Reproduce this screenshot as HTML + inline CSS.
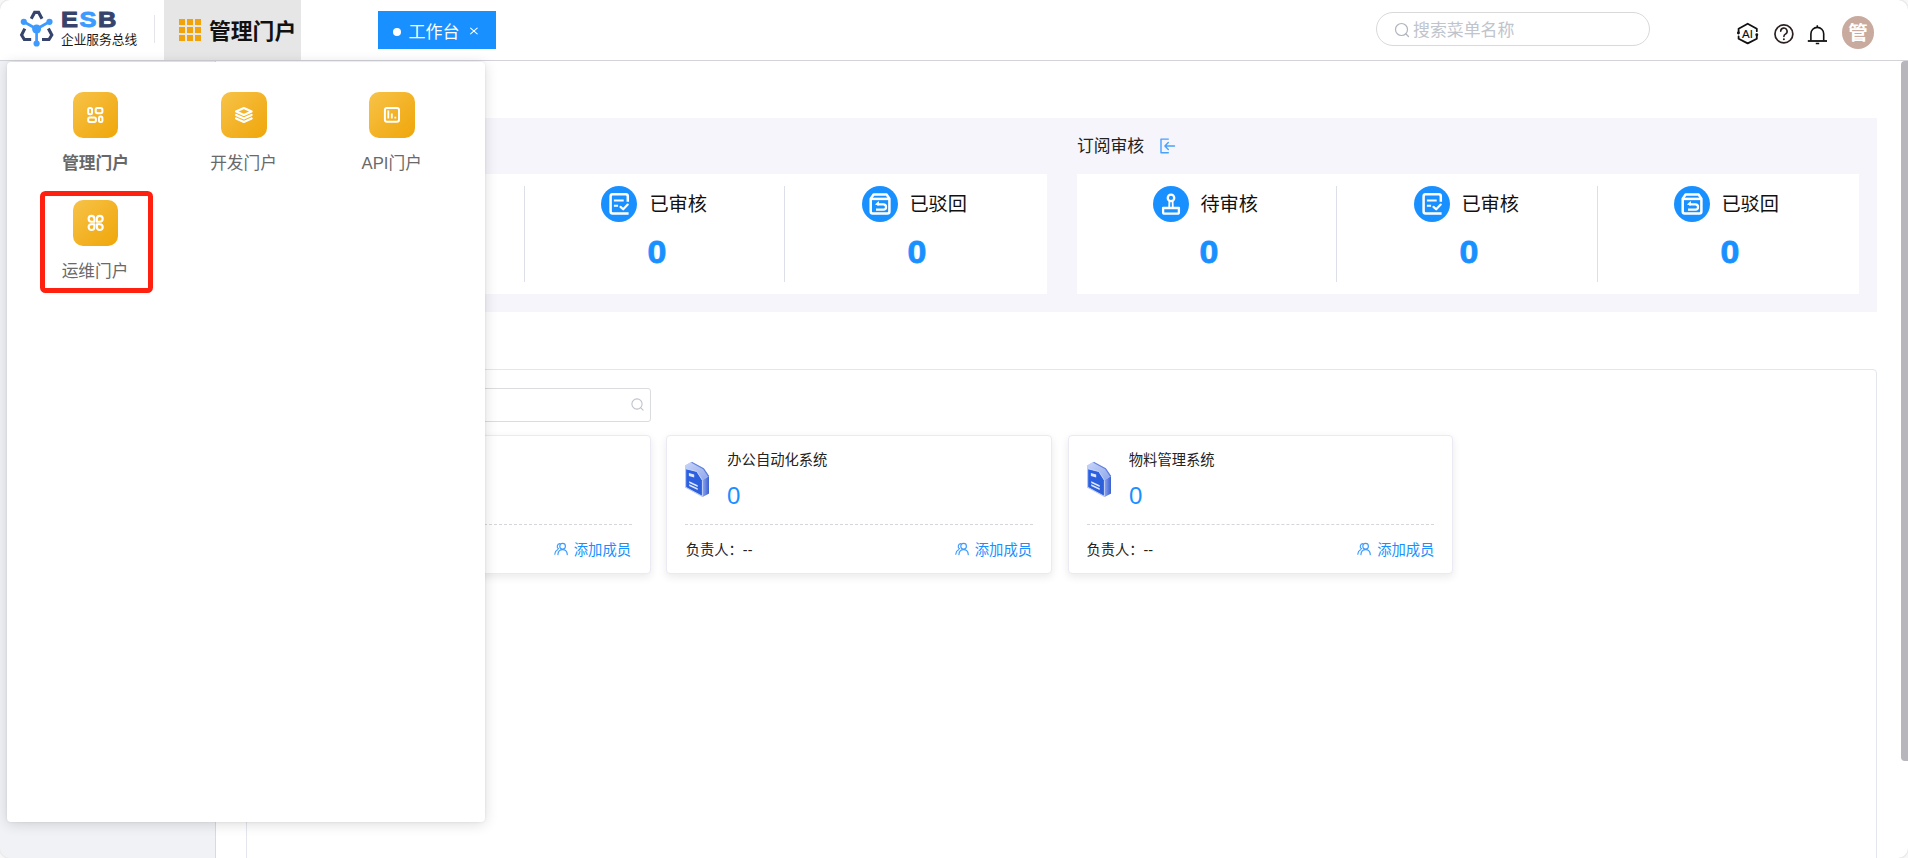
<!DOCTYPE html>
<html lang="zh-CN">
<head>
<meta charset="utf-8">
<title>ESB 企业服务总线</title>
<style>
*{box-sizing:border-box;margin:0;padding:0}
html,body{width:1908px;height:858px;overflow:hidden;background:#fff;}
body{font-family:"Liberation Sans","Noto Sans CJK SC",sans-serif;color:#222;position:relative;}
.abs{position:absolute}
/* header */
#header{position:absolute;left:0;top:0;width:1908px;height:61px;background:#fff;border-bottom:1px solid #d2d4d9;z-index:5}
#logo-ic{position:absolute;left:19px;top:10px;width:36px;height:37px}
#esb{position:absolute;left:61px;top:7.500px;font-size:22.500px;line-height:24px;font-weight:700;color:#36446c;letter-spacing:1.400px;-webkit-text-stroke:0.9px #36446c;transform:scaleX(1.13);transform-origin:left center}
#esb b{color:#3d9bff;-webkit-text-stroke:0.9px #3d9bff}
#esb-sub{position:absolute;left:61px;top:32px;font-size:12.7px;line-height:16px;color:#1a1a1a;font-weight:400;white-space:nowrap}
#hdiv{position:absolute;left:154px;top:15px;width:1px;height:28px;background:#e4e5ea}
#portal-tab{position:absolute;left:164px;top:0;width:137px;height:60px;background:#e6e6e6}
#grid-ic{position:absolute;left:15px;top:19px;width:22px;height:22px}
#portal-tab span{position:absolute;left:45px;top:17.4px;font-size:21.8px;line-height:30px;font-weight:700;color:#111;white-space:nowrap}
#work-tab{position:absolute;left:378px;top:11px;width:118px;height:38px;background:#1890ff;color:#fff}
#work-tab i{position:absolute;left:15px;top:17px;width:8px;height:8px;border-radius:50%;background:#fff}
#work-tab span{position:absolute;left:30.5px;top:9.5px;font-size:17px;line-height:24px;white-space:nowrap}
#work-tab svg{position:absolute;left:90.500px;top:15.200px;width:10px;height:10px}
#search{position:absolute;left:1376px;top:12px;width:274px;height:34px;border:1px solid #d9d9d9;border-radius:17px;background:#fff}
#search svg{position:absolute;left:17px;top:8.5px;width:16px;height:16px}
#search span{position:absolute;left:36px;top:6px;font-size:16.9px;line-height:24px;color:#c0c4cc;white-space:nowrap}
#avatar{position:absolute;left:1842px;top:16px;width:32px;height:32.600px;border-radius:50%;background:#c8aa9f;color:#fff;font-size:19.500px;font-weight:700;line-height:35px;text-align:center}
/* layout behind */
#sidebar{position:absolute;left:0;top:61px;width:216px;height:797px;background:#f0f2f5;border-right:1px solid #d8dade}
#panel{position:absolute;left:246px;top:369px;width:1631px;height:520px;border:1px solid #e4e6ee;border-radius:4px;background:#fff}
#band{position:absolute;left:246px;top:118px;width:1631px;height:194px;background:#f5f5fb}
.wcard{position:absolute;top:174px;height:120px;background:#fff}
.vdiv{position:absolute;top:186px;width:1px;height:96px;background:#dddfe8}
.stat-ic{position:absolute;top:186px;width:36px;height:36px;border-radius:50%;background:#1890ff}
.stat-ic svg{position:absolute;left:0;top:0;width:36px;height:36px}
.stat-t{position:absolute;top:191.400px;margin-left:-.6px;font-size:19.2px;line-height:28px;color:#111;white-space:nowrap}
.stat-n{position:absolute;top:232.400px;width:60px;margin-left:-30px;text-align:center;font-size:32px;line-height:40px;font-weight:700;color:#1890ff;-webkit-text-stroke:.8px #1890ff;transform:scaleX(1.06)}
.sub-title{position:absolute;top:135.400px;font-size:16.8px;line-height:24px;color:#222;white-space:nowrap}
#sub-ic{position:absolute;left:1158px;top:136px;width:20px;height:20px}
#sinput{position:absolute;left:300px;top:388px;width:351px;height:34px;border:1px solid #dbdcdf;border-radius:3px;background:#fff}
#sinput svg{position:absolute;right:5.500px;top:8px;width:15px;height:15px}
.card{position:absolute;top:435px;width:386px;height:139px;background:#fff;border:1px solid #eaeaf4;border-radius:4px;box-shadow:0 3px 8px rgba(0,0,0,.085)}
.card .ttl{position:absolute;left:60.300px;top:13.700px;font-size:14.3px;line-height:20px;color:#222;white-space:nowrap}
.card .num{position:absolute;left:60px;top:44px;font-size:24px;line-height:32px;color:#1890ff}
.card .dash{position:absolute;left:18px;right:18px;top:88px;height:0;border-top:1px dashed #d4d6dc}
.card .own{position:absolute;left:18.700px;top:104px;font-size:14.3px;line-height:20px;color:#222;white-space:nowrap}
.card .add{position:absolute;right:19px;top:104px;font-size:14.3px;line-height:20px;color:#1890ff;white-space:nowrap}
.card .add svg{position:absolute;left:-22px;top:2px;width:16px;height:16px}
.card .doc{position:absolute;left:9px;top:16px;width:44px;height:54px}
#frame{position:absolute;left:0;top:0;width:1908px;height:858px;border-radius:10px;box-shadow:0 0 0 1px #e9e9e9,0 0 0 40px #f7f7f7;z-index:100;pointer-events:none}
.c3 .own{left:17.400px}.c3 .add{right:17.600px}.c3 .ttl{left:59.800px}
/* scrollbar */
#sb{position:absolute;left:1901px;top:61px;width:8px;height:700px;background:#b6b6bc;border-radius:4px 0 0 4px}
/* dropdown */
#dd{position:absolute;left:7px;top:62px;width:478px;height:760px;background:#fff;border-radius:4px;box-shadow:0 2px 14px rgba(0,0,0,.14),0 0 3px rgba(0,0,0,.08);z-index:10}
.tile{position:absolute;width:46px;height:46px;border-radius:10px;background:linear-gradient(135deg,#f7c349 0%,#f3b225 55%,#efa70a 100%);overflow:hidden}
.tile svg{position:absolute;left:0;top:0;width:46px;height:46px}
.tl{position:absolute;width:120px;margin-left:-60px;text-align:center;font-size:16.7px;line-height:24px;color:#696969;white-space:nowrap}
.tl.b{font-weight:700;color:#686868}
#red{position:absolute;left:32.500px;top:129px;width:113.500px;height:102px;border:5px solid #ff2010;border-radius:5.500px}
</style>
</head>
<body>
<div id="sidebar"></div>
<div id="band"></div>
<div id="panel"></div>

<!-- stats left (partially hidden) -->
<div class="wcard" style="left:264px;width:783px"></div>
<div class="vdiv" style="left:524px"></div>
<div class="vdiv" style="left:784px"></div>
<div class="sub-title" style="left:264px">服务审核</div>
<div class="stat-ic" style="left:340px"><svg viewBox="0 0 36 36" fill="none" stroke="#fff" stroke-width="2.300" stroke-linejoin="round"><circle cx="18" cy="11.900" r="3.250"/><path d="M16.400 15L16.200 21M19.600 15L19.800 21" stroke-width="1.800"/><path d="M10.100 22H25.900V26.200a1.500 1.500 0 0 1-1.500 1.500H11.600a1.500 1.500 0 0 1-1.500-1.500Z"/></svg></div>
<div class="stat-t" style="left:388px">待审核</div>
<div class="stat-n" style="left:396px">0</div>
<div class="stat-ic" style="left:601px"><svg viewBox="0 0 36 36" fill="none" stroke="#fff" stroke-width="2.500" stroke-linecap="butt" stroke-linejoin="round"><path d="M26.800 15.800V10.300a2 2 0 0 0-2-2H11.600a2 2 0 0 0-2 2V25.500a2 2 0 0 0 2 2H27.600"/><path d="M12.900 14.600H22.700M12.900 19.800H17.100" stroke-width="2"/><path d="M19.500 20.900L22.200 23.300L26.700 18.600" stroke-width="2.200" stroke-linecap="round"/></svg></div>
<div class="stat-t" style="left:650px">已审核</div>
<div class="stat-n" style="left:657px">0</div>
<div class="stat-ic" style="left:862px"><svg viewBox="0 0 36 36" fill="none" stroke="#fff" stroke-width="2.500" stroke-linejoin="round"><path d="M11.600 8.500H24.600L27.400 12.600V25.500a2 2 0 0 1-2 2H10.700a2 2 0 0 1-2-2V12.600Z"/><path d="M8.700 12.900H27.400"/><path d="M15 18.400H21.400a2.650 2.650 0 0 1 0 5.300H14" stroke-width="2.200"/><path d="M12.900 18.400L16.900 14.900V19.500Z" fill="#fff" stroke="none"/></svg></div>
<div class="stat-t" style="left:910px">已驳回</div>
<div class="stat-n" style="left:917px">0</div>

<!-- stats right -->
<div class="sub-title" style="left:1077px">订阅审核</div>
<svg id="sub-ic" viewBox="1158 136 20 20" fill="none" stroke="#47a1ff" stroke-width="1.400" stroke-linecap="round" stroke-linejoin="round"><path d="M1168.300 139.100H1161V152.700H1168.300"/><path d="M1174.500 146H1165M1168.300 142.600L1164.900 146L1168.300 149.400"/></svg>
<div class="wcard" style="left:1077px;width:782px"></div>
<div class="vdiv" style="left:1336px"></div>
<div class="vdiv" style="left:1597px"></div>
<div class="stat-ic" style="left:1153px"><svg viewBox="0 0 36 36" fill="none" stroke="#fff" stroke-width="2.300" stroke-linejoin="round"><circle cx="18" cy="11.900" r="3.250"/><path d="M16.400 15L16.200 21M19.600 15L19.800 21" stroke-width="1.800"/><path d="M10.100 22H25.900V26.200a1.500 1.500 0 0 1-1.500 1.500H11.600a1.500 1.500 0 0 1-1.500-1.500Z"/></svg></div>
<div class="stat-t" style="left:1201px">待审核</div>
<div class="stat-n" style="left:1209px">0</div>
<div class="stat-ic" style="left:1414px"><svg viewBox="0 0 36 36" fill="none" stroke="#fff" stroke-width="2.500" stroke-linecap="butt" stroke-linejoin="round"><path d="M26.800 15.800V10.300a2 2 0 0 0-2-2H11.600a2 2 0 0 0-2 2V25.500a2 2 0 0 0 2 2H27.600"/><path d="M12.900 14.600H22.700M12.900 19.800H17.100" stroke-width="2"/><path d="M19.500 20.900L22.200 23.300L26.700 18.600" stroke-width="2.200" stroke-linecap="round"/></svg></div>
<div class="stat-t" style="left:1462px">已审核</div>
<div class="stat-n" style="left:1469px">0</div>
<div class="stat-ic" style="left:1674px"><svg viewBox="0 0 36 36" fill="none" stroke="#fff" stroke-width="2.500" stroke-linejoin="round"><path d="M11.600 8.500H24.600L27.400 12.600V25.500a2 2 0 0 1-2 2H10.700a2 2 0 0 1-2-2V12.600Z"/><path d="M8.700 12.900H27.400"/><path d="M15 18.400H21.400a2.650 2.650 0 0 1 0 5.300H14" stroke-width="2.200"/><path d="M12.900 18.400L16.900 14.900V19.500Z" fill="#fff" stroke="none"/></svg></div>
<div class="stat-t" style="left:1722px">已驳回</div>
<div class="stat-n" style="left:1730px">0</div>

<!-- system list -->
<div id="sinput"><svg viewBox="0 0 15 15" fill="none" stroke="#bfc3cb" stroke-width="1.100" stroke-linecap="round"><circle cx="7" cy="7" r="5.100"/><path d="M10.800 10.800l2.300 2.400"/></svg></div>

<div class="card" style="left:265px"><div class="dash"></div><div class="add"><svg viewBox="0 0 16 16" fill="none" stroke="#3b9bff" stroke-width="1.150" stroke-linecap="round"><circle cx="10.600" cy="4.200" r="2.800"/><path d="M5.900 12.600c.2-3 2.100-5 4.700-5s4.500 2 4.700 5"/><path d="M7.800 1.600a2.800 2.800 0 0 0-1.200 5.200"/><path d="M2.800 12.200c.1-2 1-3.600 2.700-4.500"/></svg>添加成员</div></div>

<div class="card" style="left:666px"><svg class="doc" viewBox="676 452 44 54"><g>
<path d="M685.100 465.500L691.100 461.900L703.700 468.400L709 476.200V493.500L702.400 497L685.100 487.500Z" fill="#b4c4f4"/>
<path d="M685.700 468.700L696.800 471.500L702.400 480.300V496.300L685.700 487.200Z" fill="url(#dg1)"/>
<path d="M702.400 480.300L709 476.200V493.500L702.400 497Z" fill="url(#dg2)"/>
<path d="M691.100 461.900L703.700 468.400L709 476.200L702.400 480.300L696.800 471.500L685.700 468.700L685.100 465.500Z" fill="url(#dg3)"/>
<path d="M691.600 462.300L703.500 468.700L708.700 476.400" fill="none" stroke="#4a6cd6" stroke-width="1.300" stroke-opacity=".75"/><path d="M685.700 468.700L696.800 471.500L702.400 480.300V496.300L685.700 487.200Z" fill="none" stroke="#c9d6fb" stroke-width=".9"/><path d="M688.900 473.100L694.200 474.600V477.600L688.900 476.100Z" fill="#dfe7ff"/>
<path d="M689.200 481.200L697.700 485.300V487L689.200 482.900Z" fill="#dfe7ff"/>
<path d="M689.200 484.200L697.700 488.300V490L689.200 485.900Z" fill="#dfe7ff"/>
</g></svg><div class="ttl">办公自动化系统</div><div class="num">0</div><div class="dash"></div><div class="own">负责人：--</div><div class="add"><svg viewBox="0 0 16 16" fill="none" stroke="#3b9bff" stroke-width="1.150" stroke-linecap="round"><circle cx="10.600" cy="4.200" r="2.800"/><path d="M5.900 12.600c.2-3 2.100-5 4.700-5s4.500 2 4.700 5"/><path d="M7.800 1.600a2.800 2.800 0 0 0-1.200 5.200"/><path d="M2.800 12.200c.1-2 1-3.600 2.700-4.500"/></svg>添加成员</div></div>

<div class="card c3" style="left:1068px;width:385px"><svg class="doc" viewBox="676 452 44 54"><g>
<path d="M685.100 465.500L691.100 461.900L703.700 468.400L709 476.200V493.500L702.400 497L685.100 487.500Z" fill="#b4c4f4"/>
<path d="M685.700 468.700L696.800 471.500L702.400 480.300V496.300L685.700 487.200Z" fill="url(#dg1)"/>
<path d="M702.400 480.300L709 476.200V493.500L702.400 497Z" fill="url(#dg2)"/>
<path d="M691.100 461.900L703.700 468.400L709 476.200L702.400 480.300L696.800 471.500L685.700 468.700L685.100 465.500Z" fill="url(#dg3)"/>
<path d="M691.600 462.300L703.500 468.700L708.700 476.400" fill="none" stroke="#4a6cd6" stroke-width="1.300" stroke-opacity=".75"/><path d="M685.700 468.700L696.800 471.500L702.400 480.300V496.300L685.700 487.200Z" fill="none" stroke="#c9d6fb" stroke-width=".9"/><path d="M688.900 473.100L694.200 474.600V477.600L688.900 476.100Z" fill="#dfe7ff"/>
<path d="M689.200 481.200L697.700 485.300V487L689.200 482.900Z" fill="#dfe7ff"/>
<path d="M689.200 484.200L697.700 488.300V490L689.200 485.900Z" fill="#dfe7ff"/>
</g></svg><div class="ttl">物料管理系统</div><div class="num">0</div><div class="dash"></div><div class="own">负责人：--</div><div class="add"><svg viewBox="0 0 16 16" fill="none" stroke="#3b9bff" stroke-width="1.150" stroke-linecap="round"><circle cx="10.600" cy="4.200" r="2.800"/><path d="M5.900 12.600c.2-3 2.100-5 4.700-5s4.500 2 4.700 5"/><path d="M7.800 1.600a2.800 2.800 0 0 0-1.200 5.200"/><path d="M2.800 12.200c.1-2 1-3.600 2.700-4.500"/></svg>添加成员</div></div>

<svg width="0" height="0" style="position:absolute"><defs>
<linearGradient id="dg1" x1="0" y1="0" x2="1" y2="1"><stop offset="0" stop-color="#2a60e4"/><stop offset="1" stop-color="#2d5fd6"/></linearGradient><linearGradient id="dg2" x1="0" y1="0" x2="1" y2="0"><stop offset="0" stop-color="#8fa8ee"/><stop offset="1" stop-color="#3a5fd0"/></linearGradient><linearGradient id="dg3" x1="0" y1="0" x2="1" y2="1"><stop offset="0" stop-color="#c9d6fa"/><stop offset="1" stop-color="#8ea6ea"/></linearGradient>

</defs></svg>

<div id="sb"></div>

<!-- header -->
<div id="header">
<svg id="logo-ic" viewBox="19 10 36 37">
<g fill="none" stroke="#36446c" stroke-width="3.1" stroke-linejoin="miter">
<path d="M31.2 18.8L34.6 12.4H38.6L42 18.8"/>
<path d="M24.8 28.6L21.6 35L24.3 39.5H31.2"/>
<path d="M48.4 28.6L51.8 35L49 39.5H42"/>
</g>
<g stroke="#3d9bff" stroke-width="2.700" fill="#3d9bff">
<path d="M36.600 29L23.800 21.800M36.600 29L49.500 21.800M36.600 29V43"/>
<circle cx="36.600" cy="29" r="4.500" stroke="none"/>
<circle cx="23.800" cy="21.800" r="3.100" stroke="none"/>
<circle cx="49.500" cy="21.800" r="3.100" stroke="none"/>
<circle cx="36.600" cy="43.500" r="3.100" stroke="none"/>
</g>
</svg>
<div id="esb">E<b>S</b>B</div>
<div id="esb-sub">企业服务总线</div>
<div id="hdiv"></div>
<div id="portal-tab">
<svg id="grid-ic" viewBox="0 0 22 22" fill="#f0a30a"><rect x="0" y="0" width="6" height="6"/><rect x="8" y="0" width="6" height="6"/><rect x="16" y="0" width="6" height="6"/><rect x="0" y="8" width="6" height="6"/><rect x="8" y="8" width="6" height="6"/><rect x="16" y="8" width="6" height="6"/><rect x="0" y="16" width="6" height="6"/><rect x="8" y="16" width="6" height="6"/><rect x="16" y="16" width="6" height="6"/></svg>
<span>管理门户</span>
</div>
<div id="work-tab"><i></i><span>工作台</span><svg viewBox="0 0 10 10" fill="none" stroke="#fff" stroke-width="1.050" stroke-linecap="round"><path d="M1.600 2.100L8.200 7.900M8.200 2.100L1.600 7.900"/></svg></div>
<div id="search"><svg viewBox="0 0 16 16" fill="none" stroke="#b0b4bc" stroke-width="1.200" stroke-linecap="round"><circle cx="7.500" cy="7.500" r="6"/><path d="M12 12l2.500 2.500"/></svg><span>搜索菜单名称</span></div>
<svg class="abs" style="left:1730px;top:14px;width:106px;height:40px" viewBox="1730 14 106 40" fill="none" stroke="#111" stroke-width="1.800" stroke-linejoin="round" stroke-linecap="round">
<path d="M1738.600 32.200V28.700L1747.700 23.700L1756.800 28.700V31.200"/>
<path d="M1756.800 35.500V38.800L1747.700 43.400L1738.600 38.800V36.400"/>
<circle cx="1738.400" cy="33" r="1.450" fill="#111" stroke="none"/>
<circle cx="1756.800" cy="34.800" r="1.450" fill="#111" stroke="none"/>
<text x="1747.500" y="37.600" font-family="Liberation Sans, sans-serif" font-size="11.500" text-anchor="middle" fill="#111" stroke="#111" stroke-width=".15">AI</text>
<g stroke="#2a2020" stroke-width="1.700"><circle cx="1783.900" cy="33.900" r="8.950"/>
<path d="M1780.700 31.300a3.200 3.200 0 1 1 4.700 2.800c-1 .6-1.500 1.200-1.500 2.400" stroke-width="1.600"/>
<circle cx="1783.900" cy="39.300" r="1" fill="#2a2020" stroke="none"/></g>
<g stroke-width="1.600" stroke-linecap="butt"><path d="M1807.800 41H1827" stroke-width="1.800"/>
<path d="M1810.900 40.500V33.800a6.400 6.400 0 0 1 12.800 0V40.500"/>
<path d="M1817.300 25.200v2M1815.800 43.600h3.400" stroke-width="1.500"/></g>
</svg>
<div id="avatar">管</div>
</div>

<!-- dropdown -->
<div id="dd">
<div class="tile" style="left:66px;top:30px;width:45px"><svg viewBox="0 0 46 46" fill="none" stroke="#fff" stroke-width="2"><rect x="15.200" y="15.900" width="3.800" height="6.400" rx="1.500"/><rect x="22.700" y="15.900" width="6.700" height="5.300" rx="1.600"/><rect x="15.200" y="25.400" width="7.700" height="4.500" rx="1.600"/><rect x="26" y="24.600" width="3.400" height="5.300" rx="1.500"/></svg></div>
<div class="tl b" style="left:88.500px;top:89.600px">管理门户</div>
<div class="tile" style="left:214px;top:30px"><svg viewBox="0 0 46 46" fill="none" stroke="#fff" stroke-width="2.200" stroke-linejoin="round" stroke-linecap="round"><path d="M22.850 16L30.600 19.500L22.850 23L15.100 19.500Z"/><path d="M15.100 23L22.850 26.500L30.600 23"/><path d="M15.100 26.400L22.850 29.900L30.600 26.400"/></svg></div>
<div class="tl" style="left:236.500px;top:89.600px">开发门户</div>
<div class="tile" style="left:362px;top:30px"><svg viewBox="0 0 46 46" fill="none" stroke="#fff" stroke-width="2"><rect x="15.900" y="16" width="14.100" height="13.700" rx="2"/><path d="M19.300 18.400V26.600M22.800 21.600V26.600M26.300 24.700V26.600" stroke-width="1.800"/></svg></div>
<div class="tl" style="left:384.700px;top:89.600px">API门户</div>
<div class="tile" style="left:66px;top:138px;width:45px"><svg viewBox="0 0 46 46" fill="none" stroke="#fff" stroke-width="2.100" stroke-linejoin="round"><path d="M21.40 21.70H18.50a2.9 2.9 0 1 1 2.9 -2.9Z"/><path d="M23.90 21.70h2.9a2.9 2.9 0 1 0 -2.9 -2.9Z"/><path d="M21.40 24.20H18.50a2.9 2.9 0 1 0 2.9 2.9Z"/><path d="M23.90 24.20h2.9a2.9 2.9 0 1 1 -2.9 2.9Z"/></svg></div>
<div class="tl" style="left:88px;top:197.500px">运维门户</div>
<div id="red"></div>
</div>
<div id="frame"></div>
</body>
</html>
